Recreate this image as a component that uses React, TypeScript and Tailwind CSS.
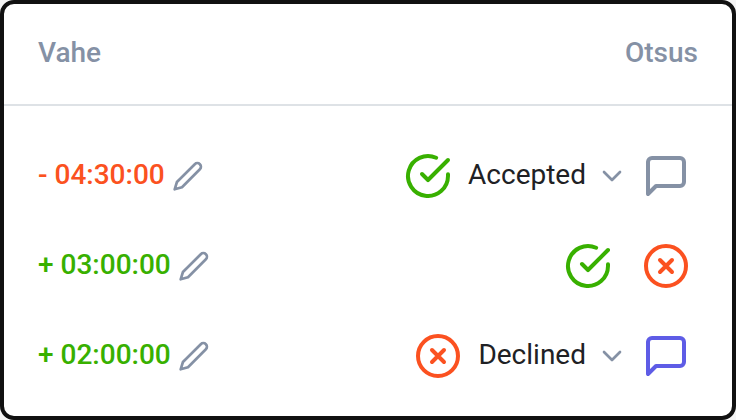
import type { ReactNode } from "react";
import { clsx } from "clsx";

type Decision = "accepted" | "declined" | "pending";

interface Row {
  id: number;
  diff: string;
  negative?: boolean;
  decision: Decision;
  hasComment?: boolean;
}

const rows: Row[] = [
  { id: 1, diff: "- 04:30:00", negative: true, decision: "accepted" },
  { id: 2, diff: "+ 03:00:00", decision: "pending" },
  { id: 3, diff: "+ 02:00:00", decision: "declined", hasComment: true },
];

interface IconProps {
  className: string;
  children: ReactNode;
}

function Icon({ className, children }: IconProps) {
  return (
    <svg
      viewBox="0 0 24 24"
      fill="none"
      stroke="currentColor"
      strokeWidth={2}
      strokeLinecap="round"
      strokeLinejoin="round"
      className={clsx("shrink-0", className)}
    >
      {children}
    </svg>
  );
}

function CheckIcon() {
  return (
    <Icon className="size-12 text-[#38b000]">
      <path d="M22 11.08V12a10 10 0 1 1-5.93-9.14" />
      <path d="M22 4 12 14.01l-3-3" />
    </Icon>
  );
}

function CrossIcon() {
  return (
    <Icon className="size-12 text-[#fb5120]">
      <circle cx="12" cy="12" r="10" />
      <path d="m15 9-6 6M9 9l6 6" />
    </Icon>
  );
}

function PencilIcon() {
  return (
    <Icon className="size-8 text-[#8591a5]">
      <path d="M17.09 3.14a2.7 2.7 0 0 1 3.82 3.82L7.5 20.4 2 22l1.7-5.5L17.09 3.14z" />
    </Icon>
  );
}

function DecisionCell({ decision, hasComment }: { decision: Decision; hasComment?: boolean }) {
  if (decision === "pending") {
    return (
      <div className="flex items-center gap-[30px]">
        <button type="button" aria-label="Accept">
          <CheckIcon />
        </button>
        <button type="button" aria-label="Decline">
          <CrossIcon />
        </button>
      </div>
    );
  }

  return (
    <div className="flex items-center">
      {decision === "accepted" ? <CheckIcon /> : <CrossIcon />}
      <span className="ml-4 -mt-[3px] text-[#202124]">
        {decision === "accepted" ? "Accepted" : "Declined"}
      </span>
      <Icon className="ml-2.5 size-8 text-[#8591a5]">
        <path d="m6 9 6 6 6-6" />
      </Icon>
      <button type="button" aria-label="Comment" className="ml-3.5">
        <Icon className={clsx("size-12", hasComment ? "text-[#5e5ce6]" : "text-[#8591a5]")}>
          <path d="M21 15a2 2 0 0 1-2 2H7l-4 4V5a2 2 0 0 1 2-2h14a2 2 0 0 1 2 2z" />
        </Icon>
      </button>
    </div>
  );
}

export default function App() {
  return (
    <div className="h-[420px] w-[736px] bg-[#f5f5f5] font-['Roboto',sans-serif] text-[28px] leading-8">
      <div className="h-full overflow-hidden rounded-[14px] border-4 border-[#111111] bg-white">
        <div className="flex h-[102px] items-center justify-between border-b-2 border-[#dee2e6] px-[34px] pb-0.5 font-medium text-[#8591a5]">
          <div>Vahe</div>
          <div>Otsus</div>
        </div>
        <div className="pt-[25px]">
          {rows.map((row) => (
            <div key={row.id} className="flex h-[90px] items-center justify-between pr-[42px] pl-[34px]">
              <div className="flex items-center gap-[7px]">
                <span
                  className={clsx(
                    "-mt-[3px] font-medium",
                    row.negative ? "text-[#fb5120]" : "text-[#38b000]"
                  )}
                >
                  {row.diff}
                </span>
                <button type="button" aria-label="Edit">
                  <PencilIcon />
                </button>
              </div>
              <DecisionCell decision={row.decision} hasComment={row.hasComment} />
            </div>
          ))}
        </div>
      </div>
    </div>
  );
}
